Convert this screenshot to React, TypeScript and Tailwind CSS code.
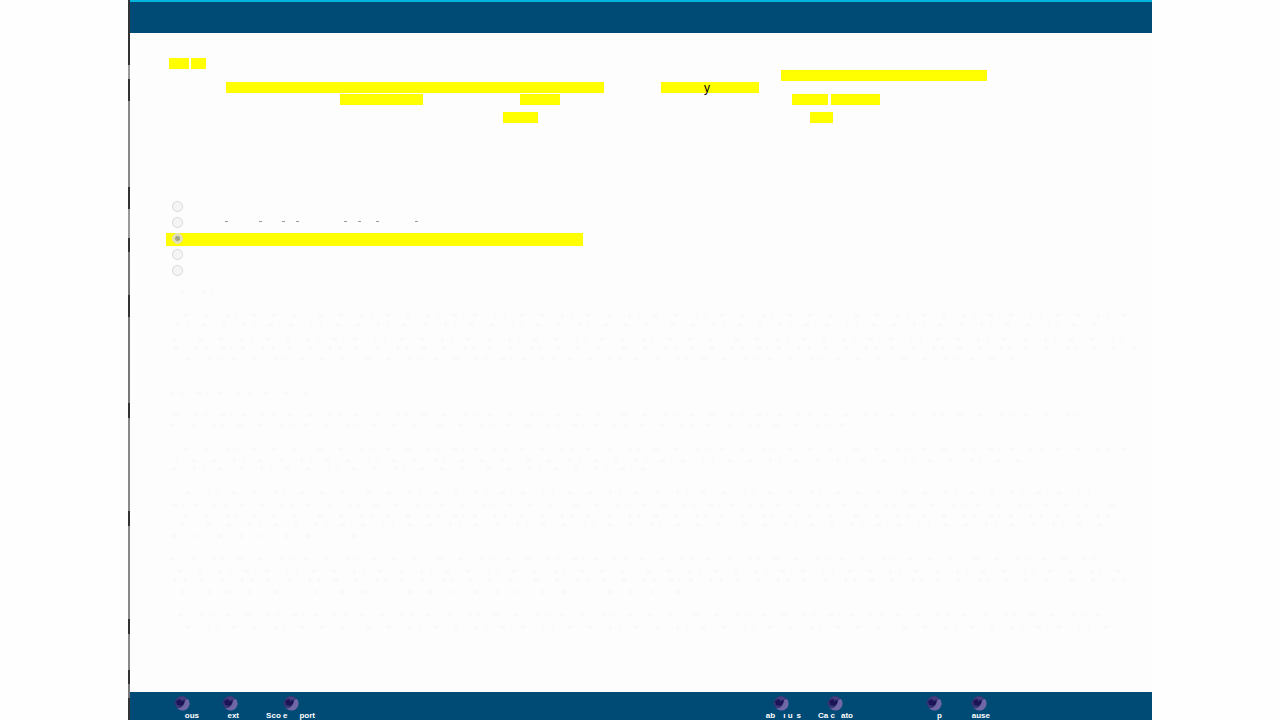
import { clsx } from 'clsx';

interface LabelPart {
  text: string;
  className?: string;
}

interface ToolButtonProps {
  name: string;
  className: string;
  parts: LabelPart[];
}

function OrbIcon() {
  return (
    <svg className="h-4 w-5 shrink-0" viewBox="0 0 20 16" aria-hidden="true">
      <path d="M1 6 L6 3 L9 11 L5 12 L3 9 Z" fill="#123f6b" />
      <circle cx="10" cy="7" r="7" fill="#3a3778" />
      <path d="M16 3 A7 7 0 0 1 5 12 Q10 13 12 8 L13 4 Z" fill="#6f67a6" />
      <path d="M4 5 L8 3 L9 5 L13 4 L12 8 L9 10 L5 9 Z" fill="#1b1557" />
      <path d="M6 2 Q10 -1 14 2 L12 4 L9 3 Z" fill="#48417f" />
    </svg>
  );
}

function ToolButton({ name, className, parts }: ToolButtonProps) {
  return (
    <button type="button" aria-label={name} className={clsx('flex flex-col items-center', className)}>
      <OrbIcon />
      <span className="flex w-full justify-end text-[8px] leading-[8px] font-bold whitespace-pre text-white">
        {parts.map((part) => (
          <span key={part.text} className={part.className}>
            {part.text}
          </span>
        ))}
      </span>
    </button>
  );
}

function Mark({ className, children }: { className: string; children?: string }) {
  return (
    <mark className={clsx('block h-[11px] shrink-0 bg-[#ffff00] text-center text-xs leading-[12px] text-black', className)}>
      {children}
    </mark>
  );
}

function Passage() {
  return (
    <section className="flex flex-col gap-px">
      <div className="flex h-[11px]">
        <Mark className="ml-[39px] w-5" />
        <Mark className="ml-[2px] w-[15px]" />
      </div>
      <div className="flex h-[11px]">
        <Mark className="ml-[651px] w-[206px]" />
      </div>
      <div className="flex h-[11px]">
        <Mark className="ml-24 w-[378px]" />
        <Mark className="ml-[57px] w-[98px] pr-[6px]">y</Mark>
      </div>
      <div className="flex h-[11px]">
        <Mark className="ml-[210px] w-[83px]" />
        <Mark className="ml-[97px] w-10" />
        <Mark className="ml-[232px] w-9" />
        <Mark className="ml-[3px] w-[49px]" />
      </div>
      <div className="mt-[6px] flex h-[11px]">
        <Mark className="ml-[373px] w-[35px]" />
        <Mark className="ml-[272px] w-[23px]" />
      </div>
    </section>
  );
}

const dashes = ['ml-12', 'ml-8', 'ml-[21px]', 'ml-3', 'ml-[46px]', 'ml-3', 'ml-4', 'ml-[37px]'];

const choices = ['A', 'B', 'C', 'D', 'E'];

function Choices() {
  return (
    <fieldset className="mt-[75px] ml-9">
      {choices.map((choice) => (
        <label key={choice} className="flex h-4 items-end">
          <span
            className={clsx('flex h-[13px] items-start', choice === 'C' && 'w-[417px] bg-[#ffff00]')}
          >
            <input
              type="radio"
              name="answer"
              aria-label={`Choice ${choice}`}
              defaultChecked={choice === 'C'}
              className="ml-[6px] size-[11px] appearance-none rounded-full border border-[#d8d8d8] bg-[#f5f5f5] checked:border-[#e2e2b5] checked:bg-[radial-gradient(circle,#a4a488_0_2px,#dedeb8_3px)]"
            />
          </span>
          {choice === 'B' && (
            <span className="ml-[-6px] flex h-[9px]">
              {dashes.map((dash, i) => (
                <span key={i} className={clsx('h-px w-[3px] -mr-px bg-[#999999]', dash)} />
              ))}
            </span>
          )}
        </label>
      ))}
    </fieldset>
  );
}

const explanation = [
  { y: 7, width: 60 },
  { y: 29, width: 970 },
  { y: 39, width: 940 },
  { y: 53, width: 960 },
  { y: 62, width: 970 },
  { y: 73, width: 850 },
  { y: 107, width: 145 },
  { y: 129, width: 920 },
  { y: 139, width: 690 },
  { y: 163, width: 965 },
  { y: 175, width: 860 },
  { y: 183, width: 490 },
  { y: 207, width: 930 },
  { y: 219, width: 950 },
  { y: 230, width: 950 },
  { y: 239, width: 950 },
  { y: 250, width: 200 },
  { y: 273, width: 940 },
  { y: 285, width: 960 },
  { y: 294, width: 960 },
  { y: 306, width: 530 },
  { y: 329, width: 950 },
  { y: 341, width: 950 },
];

function Explanation() {
  return (
    <svg className="mt-2 ml-9 h-[360px] w-[980px] max-w-full" aria-hidden="true">
      {explanation.map(({ y, width }) => (
        <line
          key={y}
          x1="4"
          x2={width}
          y1={y}
          y2={y}
          stroke="#f9f9f9"
          strokeWidth="3"
          strokeDasharray="3 7 2 13 5 6 1 9 4 17"
          strokeDashoffset={y * 5}
        />
      ))}
    </svg>
  );
}

export default function App() {
  return (
    <div className="min-h-screen bg-[#fefefe] px-[10%] font-['Liberation_Sans',Arial,sans-serif]">
      <div className="flex min-h-screen">
        <div className="w-[2px] shrink-0 bg-[linear-gradient(#333_0_9%,#999_9%_11%,#333_11%_14%,#888_14%_26%,#333_26%_29%,#999_29%_33%,#333_33%_35%,#777_35%_41%,#333_41%_44%,#777_44%_56%,#333_56%_58%,#888_58%_71%,#333_71%_73%,#888_73%_86%,#333_86%_88%,#888_88%_93%,#333_93%_95%,#777_95%_97%,#333_97%)]" />
        <div className="flex min-w-0 flex-1 flex-col bg-[#fdfdfd]">
          <header className="h-[33px] border-t-2 border-[#00b4dc] bg-[#004a76]" />
          <main className="flex-1 pt-[25px]">
            <Passage />
            <Choices />
            <Explanation />
          </main>
          <footer className="flex h-7 items-start justify-between bg-[#004a76] pt-1 pr-[162px] pl-[35px]">
            <nav aria-label="Question navigation" className="flex">
              <ToolButton name="Previous" className="w-[34px]" parts={[{ text: 'ous' }]} />
              <ToolButton name="Next" className="ml-[22px] w-[18px]" parts={[{ text: 'ext' }]} />
              <ToolButton
                name="Score Report"
                className="ml-[27px] w-[49px]"
                parts={[{ text: 'Sco e' }, { text: 'port', className: 'ml-3' }]}
              />
            </nav>
            <nav aria-label="Tools" className="flex">
              <ToolButton
                name="Lab Values"
                className="w-[41px]"
                parts={[{ text: 'ab' }, { text: 'ı u', className: 'ml-2' }, { text: 's', className: 'ml-1' }]}
              />
              <ToolButton
                name="Calculator"
                className="ml-4 w-9"
                parts={[{ text: 'Ca c' }, { text: 'ato', className: 'ml-[6px]' }]}
              />
              <ToolButton name="Help" className="ml-[72px] w-[17px]" parts={[{ text: 'p' }]} />
              <ToolButton name="Pause" className="ml-[25px] w-[23px]" parts={[{ text: 'ause' }]} />
            </nav>
          </footer>
        </div>
      </div>
    </div>
  );
}
